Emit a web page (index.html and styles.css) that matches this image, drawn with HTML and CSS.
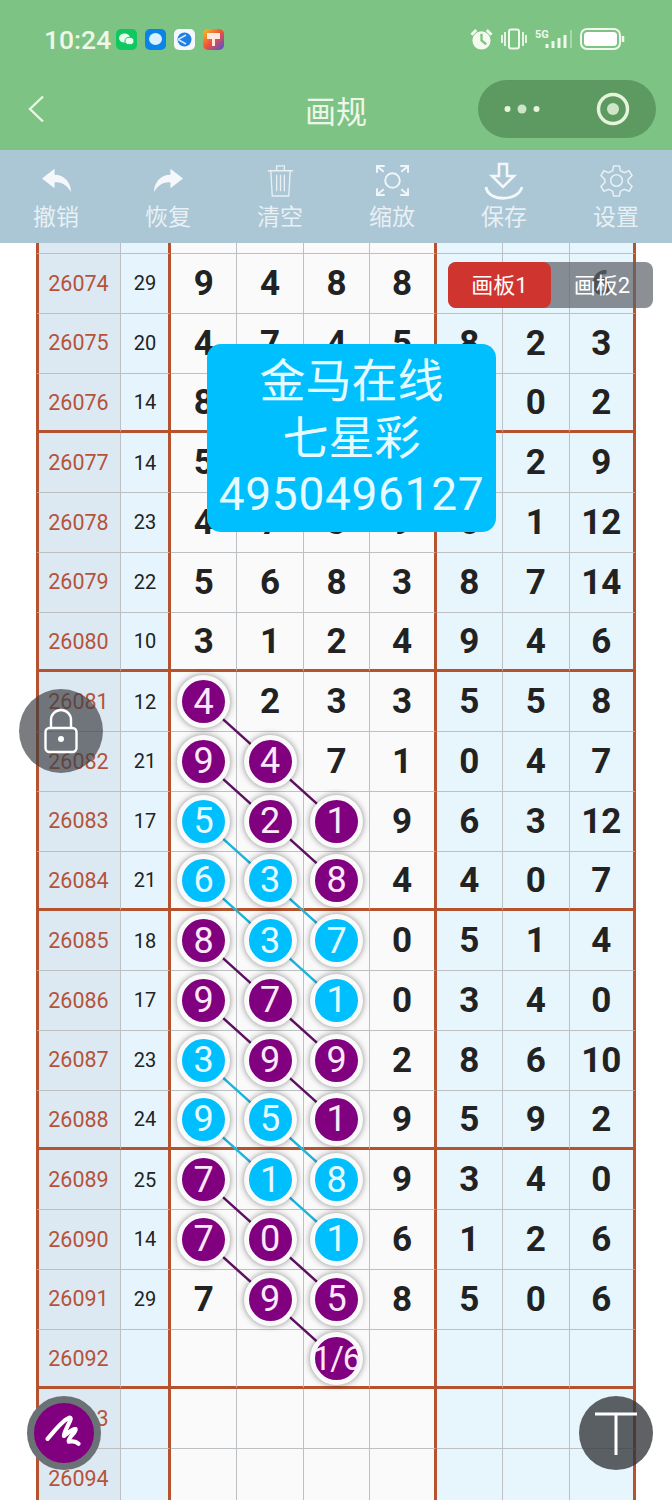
FILE: index.html
```html
<!DOCTYPE html>
<html lang="zh">
<head>
<meta charset="utf-8">
<title>画规</title>
<link rel="stylesheet" href="styles.css">
</head>
<body>
<div class="app">
  <header class="head">
    <div class="status">
      <div class="status-left">
        <span class="time">10:24</span>
        <svg class="app-ico" viewBox="0 0 21 21"><rect width="21" height="21" rx="5" fill="#10c860"/><ellipse cx="8.500" cy="9" rx="5.500" ry="4.500" fill="#e8fff0"/><ellipse cx="13.500" cy="12" rx="4.500" ry="3.700" fill="#e8fff0" stroke="#10c860"/></svg>
        <svg class="app-ico" viewBox="0 0 21 21"><rect width="21" height="21" rx="5" fill="#0a84e8"/><ellipse cx="10.500" cy="10" rx="6.500" ry="6" fill="#d8f0ff"/></svg>
        <svg class="app-ico" viewBox="0 0 21 21"><rect width="21" height="21" rx="5" fill="#f4f8fc"/><circle cx="10.500" cy="10.500" r="7" fill="#1f7fe0"/><path d="M4 10.500 L12 6 M4 10.500 L12 15" stroke="#cfe8ff" stroke-width="1.500"/></svg>
        <svg class="app-ico" viewBox="0 0 21 21"><defs><linearGradient id="rb" x1="0" y1="0" x2="1" y2="1"><stop offset="0" stop-color="#f5c518"/><stop offset=".5" stop-color="#f0503c"/><stop offset="1" stop-color="#4a50e0"/></linearGradient></defs><rect width="21" height="21" rx="5" fill="url(#rb)"/><rect x="4" y="4" width="13" height="6" fill="#ffe9e0"/><rect x="9" y="10" width="3" height="7" fill="#ffe9e0"/></svg>
      </div>
      <div class="status-right">
        <svg class="st-alarm" viewBox="0 0 24 24"><circle cx="12" cy="13" r="9.500" fill="#f4faf0"/><path d="M12 6v7l5 4" stroke="#7dc383" stroke-width="2.400" fill="none"/><path d="M1.500 7l5-5M22.500 7l-5-5" stroke="#f4faf0" stroke-width="3"/></svg>
        <svg class="st-vib" viewBox="0 0 28 22"><rect x="9" y="1.500" width="10" height="19" rx="2" fill="none" stroke="#f0f8ee" stroke-width="2"/><path d="M5 4v14M2 7v8M23 4v14M26 7v8" stroke="#f0f8ee" stroke-width="1.800"/></svg>
        <svg class="st-sig" viewBox="0 0 38 24"><path d="M12 21v-4M18 21v-7M24 21v-10M30 21v-13" stroke="#f0f8ee" stroke-width="3"/><path d="M36 21V3" stroke="#a8d8ac" stroke-width="2"/><text x="0" y="11" class="st-5g">5G</text></svg>
        <svg class="st-bat" viewBox="0 0 46 22"><rect x="1" y="1" width="39" height="20" rx="6" fill="none" stroke="#f0f8ee" stroke-width="2"/><rect x="4" y="4" width="33" height="14" rx="3.500" fill="#fff"/><path d="M43 8v6" stroke="#f0f8ee" stroke-width="2.500"/></svg>
      </div>
    </div>
    <div class="nav">
      <svg class="back" viewBox="0 0 18 28"><path d="M16 1.500 L3 14 L16 26.500" fill="none" stroke="#eaf6e4" stroke-width="2.400"/></svg>
      <h1 class="title">画规</h1>
      <div class="capsule">
        <svg class="cap-dots" viewBox="0 0 36 12"><circle cx="3.500" cy="6" r="3" fill="#e6f4dc"/><circle cx="18" cy="6" r="4.500" fill="#cfe6c6"/><circle cx="32.500" cy="6" r="3" fill="#e6f4dc"/></svg>
        <svg class="cap-ring" viewBox="0 0 34 34"><circle cx="17" cy="17" r="14.500" fill="none" stroke="#e6f4dc" stroke-width="3.400"/><circle cx="17" cy="17" r="6" fill="#cfe6c6"/></svg>
      </div>
    </div>
  </header>

  <nav class="tools">
    <div class="tool"><svg viewBox="0 0 34 32"><path d="M15 4 L2 14 L15 24 V18 C22 17 28 21 32 28 C32 18 25 10 15 10 Z" fill="#f4f8fa"/></svg><span>撤销</span></div>
    <div class="tool"><svg viewBox="0 0 34 32"><path d="M19 4 L32 14 L19 24 V18 C12 17 6 21 2 28 C2 18 9 10 19 10 Z" fill="#f4f8fa"/></svg><span>恢复</span></div>
    <div class="tool"><svg viewBox="0 0 34 36"><path d="M4 8h26M13 8V3h8v5M7 8l1.500 26h17L27 8M13 12v17M17 12v17M21 12v17" fill="none" stroke="#e8f0f4" stroke-width="1.400"/></svg><span>清空</span></div>
    <div class="tool"><svg viewBox="0 0 34 34"><circle cx="17" cy="17" r="7.500" fill="none" stroke="#f0f6f8" stroke-width="2"/><path d="M1 9V2h8M25 2h8v7M1 25v7h8M25 32h8v-7M2 3l6 5M32 3l-6 5M2 31l6-5M32 31l-6-5" fill="none" stroke="#f0f6f8" stroke-width="2"/></svg><span>缩放</span></div>
    <div class="tool"><svg class="save" viewBox="0 0 40 38"><path d="M15 2h8v12h7L19 25 8 14h7Z" fill="none" stroke="#f4f8fa" stroke-width="2.600"/><path d="M2 25c2 15 32 15 36 0" fill="none" stroke="#f4f8fa" stroke-width="2.800"/></svg><span>保存</span></div>
    <div class="tool"><svg viewBox="0 0 34 34"><circle cx="17" cy="17" r="6" fill="none" stroke="#e8f0f4" stroke-width="1.600"/><path d="M14 2h6l1 5 4 2 5-2 3 5-4 4v3l4 4-3 5-5-2-4 2-1 5h-6l-1-5-4-2-5 2-3-5 4-4v-3L1 12l3-5 5 2 4-2Z" fill="none" stroke="#e8f0f4" stroke-width="1.600"/></svg><span>设置</span></div>
  </nav>

  <main class="board">
    <div class="table">
      <svg class="links" width="600" height="1257">
        <polyline class="lp" points="168,459.100 234.400,518.900 300.800,578.600"/>
        <polyline class="lp" points="168,518.900 234.400,578.600 300.800,638.400"/>
        <polyline class="lc" points="168,578.600 234.400,638.400 300.800,698.100"/>
        <polyline class="lc" points="168,638.400 234.400,698.100 300.800,757.900"/>
        <polyline class="lp" points="168,698.100 234.400,757.900 300.800,817.600"/>
        <polyline class="lp" points="168,757.900 234.400,817.600 300.800,877.400"/>
        <polyline class="lc" points="168,817.600 234.400,877.400 300.800,937.100"/>
        <polyline class="lc" points="168,877.400 234.400,937.100 300.800,996.900"/>
        <polyline class="lp" points="168,937.100 234.400,996.900 300.800,1056.600"/>
        <polyline class="lp" points="168,996.900 234.400,1056.600 300.800,1116.400"/>
      </svg>
      <div class="row top"><span></span><span></span><span></span><span></span><span></span><span></span><span></span><span></span><span></span></div>
      <div class="row"><span>26074</span><span>29</span><span>9</span><span>4</span><span>8</span><span>8</span><span></span><span></span><span>6</span></div>
      <div class="row"><span>26075</span><span>20</span><span>4</span><span>7</span><span>4</span><span>5</span><span>8</span><span>2</span><span>3</span></div>
      <div class="row end"><span>26076</span><span>14</span><span>8</span><span></span><span></span><span></span><span></span><span>0</span><span>2</span></div>
      <div class="row"><span>26077</span><span>14</span><span>5</span><span></span><span></span><span></span><span></span><span>2</span><span>9</span></div>
      <div class="row"><span>26078</span><span>23</span><span>4</span><span>7</span><span>3</span><span>9</span><span>5</span><span>1</span><span>12</span></div>
      <div class="row"><span>26079</span><span>22</span><span>5</span><span>6</span><span>8</span><span>3</span><span>8</span><span>7</span><span>14</span></div>
      <div class="row end"><span>26080</span><span>10</span><span>3</span><span>1</span><span>2</span><span>4</span><span>9</span><span>4</span><span>6</span></div>
      <div class="row"><span>26081</span><span>12</span><span><i class="ball p">4</i></span><span>2</span><span>3</span><span>3</span><span>5</span><span>5</span><span>8</span></div>
      <div class="row"><span>26082</span><span>21</span><span><i class="ball p">9</i></span><span><i class="ball p">4</i></span><span>7</span><span>1</span><span>0</span><span>4</span><span>7</span></div>
      <div class="row"><span>26083</span><span>17</span><span><i class="ball c">5</i></span><span><i class="ball p">2</i></span><span><i class="ball p">1</i></span><span>9</span><span>6</span><span>3</span><span>12</span></div>
      <div class="row end"><span>26084</span><span>21</span><span><i class="ball c">6</i></span><span><i class="ball c">3</i></span><span><i class="ball p">8</i></span><span>4</span><span>4</span><span>0</span><span>7</span></div>
      <div class="row"><span>26085</span><span>18</span><span><i class="ball p">8</i></span><span><i class="ball c">3</i></span><span><i class="ball c">7</i></span><span>0</span><span>5</span><span>1</span><span>4</span></div>
      <div class="row"><span>26086</span><span>17</span><span><i class="ball p">9</i></span><span><i class="ball p">7</i></span><span><i class="ball c">1</i></span><span>0</span><span>3</span><span>4</span><span>0</span></div>
      <div class="row"><span>26087</span><span>23</span><span><i class="ball c">3</i></span><span><i class="ball p">9</i></span><span><i class="ball p">9</i></span><span>2</span><span>8</span><span>6</span><span>10</span></div>
      <div class="row end"><span>26088</span><span>24</span><span><i class="ball c">9</i></span><span><i class="ball c">5</i></span><span><i class="ball p">1</i></span><span>9</span><span>5</span><span>9</span><span>2</span></div>
      <div class="row"><span>26089</span><span>25</span><span><i class="ball p">7</i></span><span><i class="ball c">1</i></span><span><i class="ball c">8</i></span><span>9</span><span>3</span><span>4</span><span>0</span></div>
      <div class="row"><span>26090</span><span>14</span><span><i class="ball p">7</i></span><span><i class="ball p">0</i></span><span><i class="ball c">1</i></span><span>6</span><span>1</span><span>2</span><span>6</span></div>
      <div class="row"><span>26091</span><span>29</span><span>7</span><span><i class="ball p">9</i></span><span><i class="ball p">5</i></span><span>8</span><span>5</span><span>0</span><span>6</span></div>
      <div class="row end"><span>26092</span><span></span><span></span><span></span><span><i class="ball p wide">1/6</i></span><span></span><span></span><span></span><span></span></div>
      <div class="row"><span>26093</span><span></span><span></span><span></span><span></span><span></span><span></span><span></span><span></span></div>
      <div class="row"><span>26094</span><span></span><span></span><span></span><span></span><span></span><span></span><span></span><span></span></div>
    </div>

    <div class="tabs"><span class="tab on">画板1</span><span class="tab">画板2</span></div>

    <div class="notice"><p>金马在线</p><p>七星彩</p><p class="num">4950496127</p></div>

    <div class="fab lock">
      <svg viewBox="0 0 36 46"><path d="M8 21V12a10 10 0 0 1 20 0v9" fill="none" stroke="#fff" stroke-width="2.400"/><rect x="2.500" y="20" width="31" height="24" rx="4" fill="none" stroke="#fff" stroke-width="2.400"/><circle cx="18" cy="31" r="3" fill="#fff"/></svg>
    </div>
    <div class="fab pen">
      <svg viewBox="0 0 62 62"><path d="M14 37 C22 28 30 17 37 15 C41 15 30 30 31 34 C34 32 40 26 43 27 C44 30 34 37 36 40 C38 40 42 38 46 42" fill="none" stroke="#fff" stroke-width="4.400" stroke-linecap="round" stroke-linejoin="round"/></svg>
    </div>
    <div class="fab text">
      <svg viewBox="0 0 74 74"><path d="M16 18h42M37 18v41" fill="none" stroke="#fff" stroke-width="3"/></svg>
    </div>
  </main>
</div>
</body>
</html>
```
FILE: styles.css
```css
* { box-sizing: border-box; }
html, body { margin: 0; padding: 0; background: #fff; }
body { font-family: Roboto, "Noto Sans CJK SC", sans-serif; }

.app { position: relative; width: 672px; height: 1500px; overflow: hidden; display: flex; flex-direction: column; }

/* header */
.head { height: 150px; background: #7dc383; flex: none; }
.status { height: 80px; padding: 0 44px 2px; display: flex; justify-content: space-between; align-items: center; }
.status-left { display: flex; align-items: center; gap: 8px; }
.time { font-size: 26.500px; font-weight: 500; color: #eef7e8; margin-right: -3px; }
.app-ico { width: 21px; height: 21px; }
.status-right { display: flex; align-items: center; gap: 7px; margin-right: 2px; }
.st-alarm { width: 23px; height: 23px; }
.st-vib { width: 28px; height: 22px; }
.st-sig { width: 38px; height: 24px; }
.st-5g { font: 700 11px Roboto, sans-serif; fill: #f0f8ee; }
.st-bat { width: 46px; height: 22px; }

.nav { position: relative; height: 58px; display: flex; align-items: center; justify-content: center; }
.back { position: absolute; left: 27px; top: 15px; width: 18px; height: 28px; }
.title { margin: 0; font-size: 31px; font-weight: 400; color: #eef6ea; font-family: "Noto Sans CJK SC", sans-serif; }
.capsule { position: absolute; left: 478px; top: 0; width: 178px; height: 58px; border-radius: 29px; background: #5c9a62; display: flex; align-items: center; justify-content: space-between; padding: 0 26px; }
.cap-dots { width: 36px; height: 12px; }
.cap-ring { width: 34px; height: 34px; }

/* toolbar */
.tools { height: 93px; background: #abc6d4; flex: none; display: grid; grid-template-columns: repeat(6, 112px); }
.tool { display: flex; flex-direction: column; align-items: center; padding-top: 12px; color: #e8f0f4; font-family: "Noto Sans CJK SC", sans-serif; font-size: 23px; line-height: 28px; }
.tool svg { width: 33px; height: 37px; display: block; margin-bottom: 2px; }
.tool .save { width: 42px; height: 38px; margin-bottom: 1px; }

/* board */
.board { flex: 1; min-height: 0; overflow: hidden; }
.table { position: relative; width: 600px; margin-left: 36px; }
.links { position: absolute; left: 0; top: 0; z-index: 1; pointer-events: none; }
.links polyline { fill: none; stroke-width: 2.500; }
.lp { stroke: #5e1163; }
.lc { stroke: #1db4dc; }

.row { display: grid; grid-template-columns: 85px 50px repeat(7, 66.430px); height: 59.750px; }
.row.top { height: 11px; }
.row > span { display: flex; align-items: center; justify-content: center; border-bottom: 1.500px solid #bcc0c2; border-right: 1.500px solid #bcc0c2; background: #fafafa; color: #222; font-size: 35px; font-weight: 700; line-height: 1; min-width: 0; }
.row.end > span { border-bottom: 3px solid #b5532e; padding-top: 1px; }
.row > span:nth-child(1) { background: #dce9f3; color: #b5533a; font-size: 21.500px; font-weight: 400; border-left: 3px solid #b5532e; padding-right: 2px; }
.row > span:nth-child(2) { background: #e6f5fd; color: #222; font-size: 20px; font-weight: 400; border-right: 3px solid #b5532e; padding-left: 1px; }
.row > span:nth-child(6) { border-right: 3px solid #b5532e; }
.row > span:nth-child(n+7) { background: #e7f5fd; }
.row > span:nth-child(9) { border-right: 3px solid #b5532e; }

.ball { position: relative; z-index: 2; flex: none; width: 53px; height: 53px; border-radius: 50%; border: 5px solid #fafafa; display: flex; align-items: center; justify-content: center; font-style: normal; font-weight: 400; font-size: 36px; color: #fbe9fb; box-shadow: 0 0 6px rgba(0, 0, 0, .45); }
.ball.p { background: #800080; }
.ball.c { background: #00bfff; color: #e6fbff; }
.ball.wide { font-size: 33px; letter-spacing: -1px; white-space: nowrap; }

/* overlays */
.tabs { position: absolute; z-index: 3; left: 448px; top: 262px; width: 205px; height: 46px; border-radius: 8px; background: rgba(95, 100, 105, .72); display: grid; grid-template-columns: 103px 102px; color: #fff; font-size: 22px; }
.tab { display: flex; align-items: center; justify-content: center; border-radius: 8px; padding-bottom: 4px; }
.tab.on { background: #d0342f; }

.notice { position: absolute; z-index: 3; left: 207px; top: 344px; width: 289px; height: 188px; border-radius: 14px; background: #00bfff; color: #e6fbff; text-align: center; padding-top: 9px; font-size: 46px; line-height: 56.500px; }
.notice p { margin: 0; }
.notice .num { font-size: 46px; letter-spacing: .7px; }

.fab { position: absolute; z-index: 4; border-radius: 50%; display: flex; align-items: center; justify-content: center; }
.lock { left: 19px; top: 689px; width: 84px; height: 84px; background: rgba(60, 62, 66, .68); }
.lock svg { width: 36px; height: 46px; }
.pen { left: 27px; top: 1396px; width: 74px; height: 74px; background: #800080; border: 7px solid #6b7276; }
.pen svg { width: 60px; height: 60px; flex: none; }
.text { left: 579px; top: 1396px; width: 74px; height: 74px; background: rgba(50, 52, 57, .78); }
.text svg { width: 74px; height: 74px; }
```
